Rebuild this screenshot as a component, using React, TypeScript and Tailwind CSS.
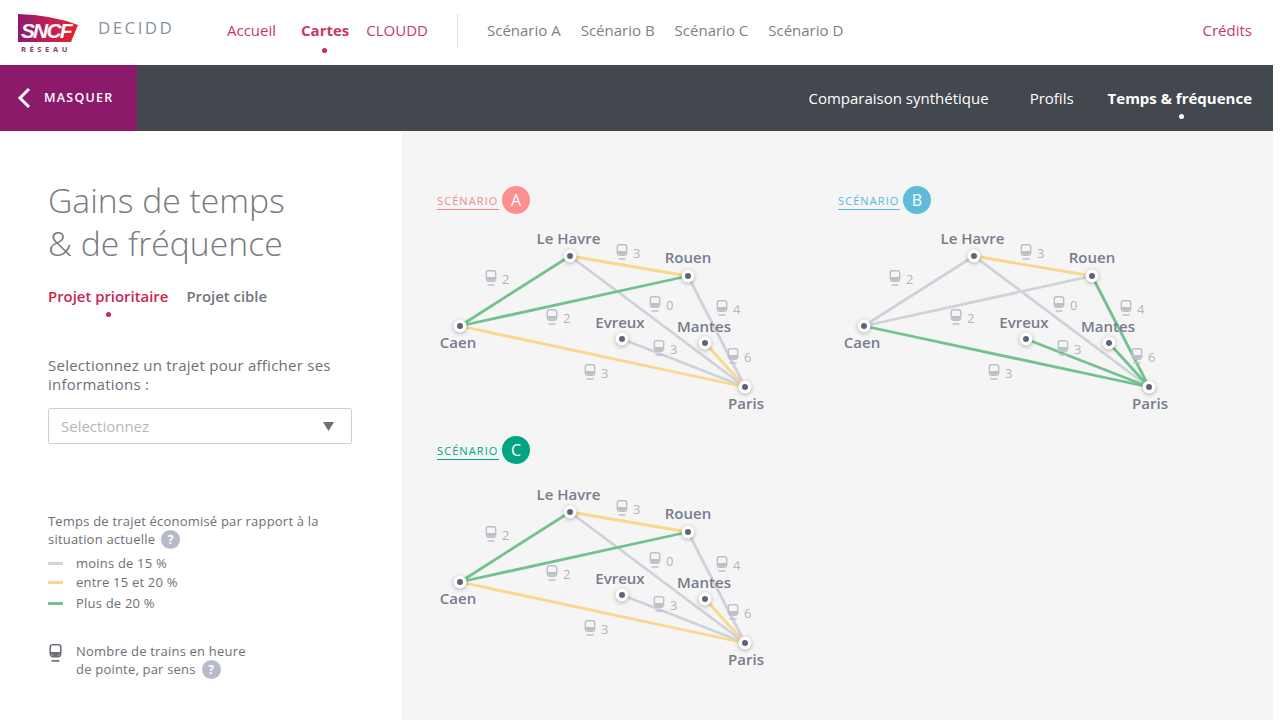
import React from 'react';

const GREY = '#ced2da';
const YELLOW = '#f9d78d';
const GREEN = '#72c28e';

type Place = 'havre' | 'rouen' | 'caen' | 'evreux' | 'mantes' | 'paris';

const nodes: Record<Place, [number, number]> = {
  havre: [145, 26],
  rouen: [263, 46],
  caen: [35, 96],
  evreux: [197, 109],
  mantes: [280, 113],
  paris: [320, 157],
};

const labels = [
  { text: 'Le Havre', x: 143.5, y: 14 },
  { text: 'Rouen', x: 263, y: 33 },
  { text: 'Caen', x: 33, y: 118 },
  { text: 'Evreux', x: 195, y: 98 },
  { text: 'Mantes', x: 279, y: 102 },
  { text: 'Paris', x: 321, y: 179 },
];

const trains = [
  { x: 197, y: 22, n: 3 },
  { x: 66, y: 48, n: 2 },
  { x: 127, y: 87, n: 2 },
  { x: 230, y: 74, n: 0 },
  { x: 297, y: 78, n: 4 },
  { x: 234, y: 118, n: 3 },
  { x: 308, y: 126, n: 6 },
  { x: 165, y: 142, n: 3 },
];

const colorsAC = [YELLOW, GREEN, GREEN, YELLOW, GREY, GREY, YELLOW, GREY];
const colorsB = [YELLOW, GREY, GREY, GREEN, GREY, GREEN, GREEN, GREEN];

const edges: [Place, Place][] = [
  ['havre', 'paris'],
  ['evreux', 'paris'],
  ['rouen', 'paris'],
  ['mantes', 'paris'],
  ['havre', 'rouen'],
  ['havre', 'caen'],
  ['caen', 'rouen'],
  ['caen', 'paris'],
];

// colour per edge, same order as the list above
const byEdge = (c: string[]) => [c[4], c[5], c[7], c[6], c[0], c[1], c[2], c[3]];

const TrainGlyph = ({ x, y, color }: { x: number; y: number; color: string }) => (
  <g transform={`translate(${x - 5.5} ${y - 8})`} fill="none" stroke={color}>
    <path d="M.8 2.5 Q.8 .7 3 .7 H8 Q10.2 .7 10.2 2.5 V8 Q10.2 11.3 7.5 11.3 H3.5 Q.8 11.3 .8 8 Z" strokeWidth="1.4" />
    <path d="M1.5 7 H9.5 V8.5 Q9 10.7 7.2 10.7 H3.8 Q2 10.7 1.5 8.5 Z" fill={color} stroke="none" />
    <path d="M2 15 H9" strokeWidth="1.5" />
  </g>
);

const RouteMap = ({ colors, className }: { colors: string[]; className: string }) => (
  <svg width="360" height="200" viewBox="0 -10 360 200" className={className} style={{ fontFamily: 'Open Sans, sans-serif' }}>
    {edges.map(([a, b], i) => (
      <line
        key={`${a}-${b}`}
        x1={nodes[a][0]}
        y1={nodes[a][1]}
        x2={nodes[b][0]}
        y2={nodes[b][1]}
        stroke={byEdge(colors)[i]}
        strokeWidth="2.8"
      />
    ))}
    {Object.entries(nodes).map(([name, [x, y]]) => (
      <g key={name}>
        <circle cx={x} cy={y} r="6.5" fill="#fff" className="drop-shadow-[0_1px_2px_rgba(0,0,0,0.3)]" />
        <circle cx={x} cy={y} r="3" fill="#5f6577" />
      </g>
    ))}
    {trains.map((t) => (
      <g key={`${t.x}-${t.y}`}>
        <TrainGlyph x={t.x} y={t.y} color="#bcc0c7" />
        <text x={t.x + 11} y={t.y + 6} fontSize="13" fill="#b2b5bc">{t.n}</text>
      </g>
    ))}
    {labels.map((l) => (
      <text key={l.text} x={l.x} y={l.y} textAnchor="middle" fontSize="15" fontWeight="600" fill="#787c8c">{l.text}</text>
    ))}
  </svg>
);

const ScenarioTitle = ({ letter, text, line, badge }: { letter: string; text: string; line: string; badge: string }) => (
  <div className="flex items-center h-7">
    <span className={`w-[62px] border-b ${line} ${text} text-[11px] tracking-[0.1em] leading-[16px] mt-[2px]`}>SCÉNARIO</span>
    <span className={`${badge} ml-[3px] w-7 h-7 rounded-full flex items-center justify-center text-white text-[16px]`}>{letter}</span>
  </div>
);

const Help = () => (
  <span className="inline-flex ml-[6px] w-[19px] h-[19px] rounded-full bg-[#b5bbca] text-white text-[12px] font-bold items-center justify-center align-baseline">?</span>
);

const LegendRow = ({ color, label, className }: { color: string; label: string; className: string }) => (
  <div className={`flex items-center ${className}`}>
    <span className={`w-[15px] h-[3px] ${color} mr-[13px]`} />
    <span>{label}</span>
  </div>
);

export default function App() {
  return (
    <div className="w-[1280px] h-[720px] overflow-hidden bg-white font-['Open_Sans',sans-serif]">
      <div className="w-[1273px] h-full flex flex-col">
        <header className="h-[65px] flex items-center bg-white shrink-0 pb-[4px]">
          <div className="ml-[18px] w-[60px] flex flex-col mt-[6px]">
            <div className="relative w-[60px] h-[28px]">
              <svg width="60" height="28" viewBox="0 0 60 28" className="absolute inset-0">
                <defs>
                  <linearGradient id="sncf" x1="0" y1="0" x2="1" y2="0">
                    <stop offset="0" stopColor="#8e1a72" />
                    <stop offset="0.55" stopColor="#c81e4f" />
                    <stop offset="1" stopColor="#e4232f" />
                  </linearGradient>
                </defs>
                <path d="M0 0 Q34 1 60 11 L53 28 H0 Z" fill="url(#sncf)" />
              </svg>
              <span className="absolute left-[3px] top-[7px] text-white italic font-bold text-[21px] leading-[20px] tracking-[-0.09em] font-['Liberation_Sans',sans-serif]">SNCF</span>
            </div>
            <span className="ml-[3px] text-[7.5px] leading-[10px] mt-[2px] font-bold tracking-[0.48em] whitespace-nowrap text-[#8c3a62]">RÉSEAU</span>
          </div>
          <span className="ml-[20px] w-[78px] mb-[5px] text-[17px] tracking-[0.14em] whitespace-nowrap text-[#8593a3]">DECIDD</span>
          <nav className="ml-[51px] flex items-center text-[15px] text-[#c9395f]">
            <span>Accueil</span>
            <span className="relative ml-[25px] font-bold">
              Cartes
              <span className="absolute left-[21px] top-[29px] w-[5px] h-[5px] rounded-full bg-[#c9274f]" />
            </span>
            <span className="ml-[17px]">CLOUDD</span>
          </nav>
          <div className="ml-[29px] w-px h-[34px] mt-[1px] bg-[#dcdee2]" />
          <nav className="ml-[29px] flex gap-[20px] text-[15px] text-[#7b7f88]">
            <span>Scénario A</span>
            <span>Scénario B</span>
            <span>Scénario C</span>
            <span>Scénario D</span>
          </nav>
          <span className="ml-auto mr-[21px] text-[15px] text-[#c9395f]">Crédits</span>
        </header>

        <div className="h-[66px] shrink-0 flex items-center bg-[#43474e] text-white">
          <div className="w-[137px] h-full bg-[#8c1a6a] flex items-center pl-[17px]">
            <svg width="14" height="22" viewBox="0 0 14 22" fill="none" stroke="#fff" strokeWidth="3">
              <path d="M12 2 L3 11 L12 20" />
            </svg>
            <span className="ml-[13px] text-[12.5px] font-semibold tracking-[0.1em]">MASQUER</span>
          </div>
          <nav className="ml-auto mr-[21px] flex items-center text-[15px]">
            <span>Comparaison synthétique</span>
            <span className="ml-[41px]">Profils</span>
            <span className="relative ml-[34px] font-bold">
              Temps &amp; fréquence
              <span className="absolute left-[71px] top-[27px] w-[5px] h-[5px] rounded-full bg-white" />
            </span>
          </nav>
        </div>

        <main className="flex-1 flex min-h-0">
          <aside className="w-[402px] shrink-0 bg-white pl-[48px] pt-[48px] pr-[40px] text-[#6b7078]">
            <h1 className="text-[33.7px] leading-[43px] font-light text-[#777b82]">
              Gains de temps
              <br />
              &amp; de fréquence
            </h1>
            <div className="flex gap-[18px] mt-[21px] text-[14.9px] font-semibold leading-[20px]">
              <span className="relative text-[#c9274f]">
                Projet prioritaire
                <span className="absolute left-[58px] top-[26px] w-[5px] h-[5px] rounded-full bg-[#c9274f]" />
              </span>
              <span className="text-[#71757d]">Projet cible</span>
            </div>
            <p className="mt-[50px] text-[15px] font-medium leading-[19px] tracking-[0.25px]">
              Selectionnez un trajet pour afficher ses informations :
            </p>
            <div className="mt-[14px] h-[36px] w-[304px] rounded-[2px] border border-[#ccd0d6] flex items-center pl-[12px] pr-[17px] text-[15px] text-[#b4b7bd]">
              <span>Selectionnez</span>
              <svg width="11" height="9" viewBox="0 0 11 9" className="ml-auto" fill="#6b7078">
                <path d="M0 0 H11 L5.5 9 Z" />
              </svg>
            </div>
            <div className="mt-[69px] text-[13px] font-medium leading-[17px] tracking-[0.2px]">
              <p>
                Temps de trajet économisé par rapport à la
                <br />
                situation actuelle
                <Help />
              </p>
              <LegendRow color="bg-[#ced2da]" label="moins de 15 %" className="mt-[6px]" />
              <LegendRow color="bg-[#f9d78d]" label="entre 15 et 20 %" className="mt-[2px]" />
              <LegendRow color="bg-[#72c28e]" label="Plus de 20 %" className="mt-[4px]" />
              <div className="flex mt-[31px]">
                <svg width="15" height="18" viewBox="0 0 11 16" className="mr-[13px] mt-[1px] shrink-0" fill="none" stroke="#6b7078">
                  <path d="M.8 2.5 Q.8 .7 3 .7 H8 Q10.2 .7 10.2 2.5 V8 Q10.2 11.3 7.5 11.3 H3.5 Q.8 11.3 .8 8 Z" strokeWidth="1.4" />
                  <path d="M1.5 7 H9.5 V8.5 Q9 10.7 7.2 10.7 H3.8 Q2 10.7 1.5 8.5 Z" fill="#6b7078" stroke="none" />
                  <path d="M2 15 H9" strokeWidth="1.5" />
                </svg>
                <p>
                  Nombre de trains en heure
                  <br />
                  de pointe, par sens
                  <Help />
                </p>
              </div>
            </div>
          </aside>

          <section className="flex-1 bg-[#f5f5f6] pl-[35px] pt-[55px] grid grid-cols-[401px_1fr] content-start">
            <div>
              <ScenarioTitle letter="A" text="text-[#f08c8c]" line="border-[#f08c8c]" badge="bg-[#fd8f8f]" />
              <RouteMap colors={colorsAC} className="mt-[6px] -ml-[12px]" />
            </div>
            <div>
              <ScenarioTitle letter="B" text="text-[#5bb9d6]" line="border-[#5bb9d6]" badge="bg-[#5fbcd9]" />
              <RouteMap colors={colorsB} className="mt-[6px] -ml-[9px]" />
            </div>
            <div className="mt-[16px]">
              <ScenarioTitle letter="C" text="text-[#00a582]" line="border-[#00a582]" badge="bg-[#00a582]" />
              <RouteMap colors={colorsAC} className="mt-[12px] -ml-[12px]" />
            </div>
          </section>
        </main>
      </div>
    </div>
  );
}
